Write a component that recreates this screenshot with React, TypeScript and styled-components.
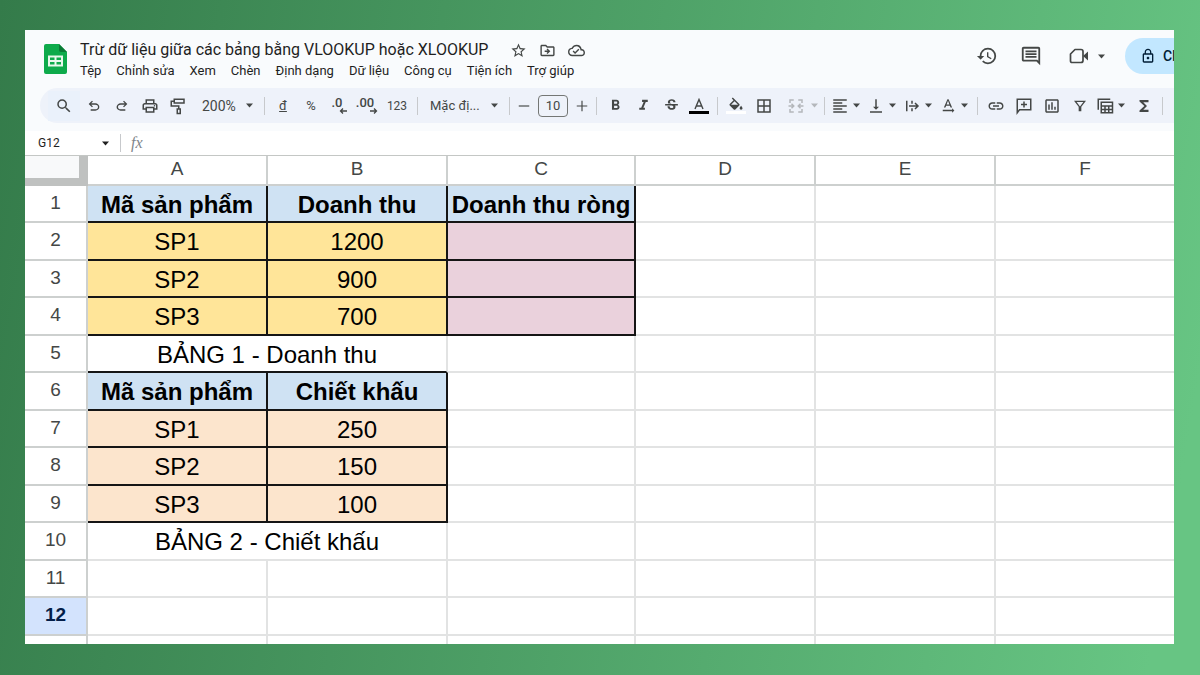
import React from "react";
import styled, { createGlobalStyle, css } from "styled-components";
import {
  MdStarBorder,
  MdOutlineDriveFileMove,
  MdOutlineCloudDone,
  MdHistory,
  MdOutlineComment,
  MdLockOutline,
  MdSearch,
  MdOutlinePrint,
  MdFormatBold,
  MdFormatItalic,
  MdStrikethroughS,
  MdBorderAll,
  MdFormatAlignLeft,
  MdVerticalAlignBottom,
  MdTextRotationNone,
  MdLink,
  MdOutlineInsertChart,
  MdFunctions,
} from "react-icons/md";

const GlobalStyle = createGlobalStyle`
  * { box-sizing: border-box; }
  body {
    margin: 0;
    font-family: Roboto, "Liberation Sans", sans-serif;
    color: #1f1f1f;
  }
  button, input, select { font: inherit; color: inherit; }
`;

const ink = "#444746";
const headerBg = "#f9fbfd";

const Backdrop = styled.div`
  display: flex;
  height: 100vh;
  padding: 30px 26px 31px 25px;
  background: linear-gradient(100deg, #347b4a 0%, #67c583 96%);
`;

const Window = styled.main`
  flex: 1;
  min-width: 0;
  display: flex;
  flex-direction: column;
  overflow: hidden;
  background: #fff;
`;

const Chrome = styled.header`
  flex: none;
  padding-bottom: 8px;
  background: ${headerBg};
`;

const TitleBar = styled.div`
  display: flex;
  align-items: flex-start;
  height: 58px;
  padding-left: 19px;
`;

const LogoLink = styled.a`
  display: flex;
  flex: none;
  padding-top: 14px;
`;

const Doc = styled.div`
  flex: 1;
  min-width: 0;
  margin-left: 13px;
  padding-top: 9px;
`;

const TitleRow = styled.div`
  display: flex;
  align-items: center;
  height: 22px;
  gap: 12px;
  white-space: nowrap;
`;

const Title = styled.h1`
  margin: 0 10px 0 0;
  font-size: 16px;
  line-height: 22px;
  font-weight: 400;
`;

const MenuBar = styled.nav`
  display: flex;
  gap: 15px;
  height: 20px;
`;

const PlainButton = styled.button`
  display: flex;
  align-items: center;
  justify-content: center;
  flex: none;
  padding: 0;
  border: 0;
  background: none;
  color: ${ink};
`;

const MenuItem = styled(PlainButton)`
  font-size: 13px;
  line-height: 20px;
  color: #1f1f1f;
`;

const Actions = styled.div`
  display: flex;
  align-items: center;
  flex: none;
  margin-right: -61px;
  padding-top: 8px;
`;

const ActionButton = styled(PlainButton)`
  width: 44px;
  height: 36px;
`;

const MeetButton = styled(PlainButton)`
  width: 62px;
  height: 36px;
  gap: 8px;
  padding-left: 6px;
  margin-right: 10px;
`;

const ShareButton = styled(PlainButton)`
  width: 110px;
  height: 36px;
  padding-left: 15px;
  gap: 7px;
  justify-content: flex-start;
  border-radius: 18px;
  background: #c2e7ff;
  color: #001d35;
  font-size: 14px;
  font-weight: 500;
`;

const Toolbar = styled.div`
  display: flex;
  align-items: center;
  height: 35px;
  margin-left: 15px;
  padding-left: 8px;
  border-radius: 18px 0 0 18px;
  background: #eef2fa;
  color: ${ink};
  font-size: 13px;
`;

const Tool = styled(PlainButton)<{ $wide?: boolean; $tint?: boolean }>`
  width: ${(p) => (p.$wide ? 32 : 28)}px;
  height: 30px;
  background: ${(p) => (p.$tint ? "#eaf1fb" : "none")};
  font-size: ${(p) => (p.$wide ? 12 : 13)}px;
`;

const MenuTool = styled(PlainButton)<{ $dim?: boolean }>`
  width: 36px;
  height: 30px;
  padding-left: 2px;
  gap: 3px;
  justify-content: flex-start;
  ${(p) =>
    p.$dim &&
    css`
      width: 42px;
      padding-left: 9px;
      gap: 5px;
      color: #b4b7bb;
    `}
`;

const Divider = styled.span<{ $roomy?: boolean }>`
  flex: none;
  width: 1px;
  height: 18px;
  margin: 0 ${(p) => (p.$roomy ? 10 : 4)}px;
  background: #c7c9cc;
`;

const Picker = styled.label<{ $compact?: boolean }>`
  display: flex;
  align-items: center;
  flex: none;
  width: ${(p) => (p.$compact ? 83 : 68)}px;
  padding: 0 6px 0 ${(p) => (p.$compact ? 8 : 10)}px;
  font-size: ${(p) => (p.$compact ? 13 : 14)}px;
`;

const PickerSelect = styled.select`
  flex: 1;
  min-width: 0;
  padding: 0;
  border: 0;
  appearance: none;
  background: none;
`;

const SizeInput = styled.input`
  flex: none;
  width: 30px;
  height: 22px;
  margin: 0 4px;
  padding: 0;
  border: 1px solid #747775;
  border-radius: 4px;
  background: none;
  text-align: center;
  font-size: 13px;
`;

const StepButton = styled(PlainButton)`
  width: 20px;
  height: 30px;
`;

const DecimalLabel = styled.span`
  display: flex;
  flex-direction: column;
  align-items: flex-start;
  padding-right: 4px;
  font-size: 13px;
  line-height: 10px;
  font-weight: 500;
  svg {
    align-self: flex-end;
    margin-right: -4px;
  }
`;

const Swatch = styled.span<{ $color: string }>`
  display: flex;
  flex-direction: column;
  align-items: center;
  svg { display: block; }
  &::after {
    content: "";
    width: 20px;
    height: 3px;
    background: ${(p) => p.$color};
  }
`;

const FormulaBar = styled.div`
  display: flex;
  align-items: center;
  flex: none;
  height: 25px;
  padding-left: 13px;
  border-bottom: 1px solid #c4c7c5;
`;

const NameBox = styled.input`
  width: 63px;
  padding: 0;
  border: 0;
  font-size: 12px;
  color: #1f1f1f;
`;

const Fx = styled.span`
  font: italic 16px "Liberation Serif", serif;
  color: #80868b;
`;

const Grid = styled.div`
  flex: 1;
  min-height: 0;
  overflow: hidden;
`;

const Sheet = styled.table`
  width: 100%;
  table-layout: fixed;
  border-collapse: separate;
  border-spacing: 0;
  font-family: "Liberation Sans", Arial, sans-serif;
  color: #000;
`;

const Col = styled.col<{ $width?: number }>`
  width: ${(p) => (p.$width ? p.$width + "px" : "auto")};
`;

const headCell = css`
  padding: 0 0 2px;
  font-size: 19px;
  line-height: 22px;
  font-weight: 400;
  color: ${ink};
  border: solid #cdd0cf;
`;

const Corner = styled.td`
  height: 30px;
  padding: 0;
  background: #f8f9fa;
  border: solid #bfc1c0;
  border-width: 0 9px 8px 0;
`;

const ColumnHead = styled.th`
  ${headCell}
  height: 30px;
  border-width: 0 2px 2px 0;
  &:last-child { border-right: 0; }
`;

const RowHead = styled.th<{ $active: boolean }>`
  ${headCell}
  border-width: 0 2px 2px 0;
  ${(p) =>
    p.$active &&
    css`
      background: #d3e3fd;
      color: #041e49;
      font-weight: 700;
    `}
`;

const Row = styled.tr`
  height: 37px;
  &:nth-child(even) { height: 38px; }
`;

const fills = {
  head: "#cfe2f3",
  yellow: "#ffe599",
  pink: "#ead1dc",
  peach: "#fce5cd",
  none: "#fff",
};

type Fill = keyof typeof fills;

const lineColor = (dark: boolean) => (dark ? "#151515" : "#e2e3e3");

const Cell = styled.td<{ $fill: Fill; $right: boolean; $bottom: boolean }>`
  padding: 2px 0 0;
  text-align: center;
  white-space: nowrap;
  font-size: 24px;
  line-height: 28px;
  font-weight: ${(p) => (p.$fill === "head" ? 700 : 400)};
  background: ${(p) => fills[p.$fill]};
  border-style: solid;
  border-width: 0 2px 2px 0;
  border-right-color: ${(p) => lineColor(p.$right)};
  border-bottom-color: ${(p) => lineColor(p.$bottom)};
  &:last-child { border-right: 0; }
`;

const Caret = () => (
  <svg width="9" height="5" viewBox="0 0 9 5" aria-hidden="true">
    <path d="M1 0.5h7L4.5 4.5z" fill="currentColor" />
  </svg>
);

const Symbol = ({ d, size = 18 }: { d: string; size?: number }) => (
  <svg width={size} height={size} viewBox="0 0 24 24" fill="none" stroke="currentColor" strokeWidth="2" aria-hidden="true">
    <path d={d} />
  </svg>
);

const SheetsLogo = () => (
  <svg width="23" height="30" viewBox="0 0 23 30" aria-hidden="true">
    <path d="M2 0h13l8 8v20a2 2 0 0 1-2 2H2a2 2 0 0 1-2-2V2a2 2 0 0 1 2-2z" fill="#0eaa4b" />
    <path d="M15 0l8 8h-6a2 2 0 0 1-2-2z" fill="#0a7a35" />
    <path d="M4 11.5h15v11H4z M6 13.5v2.5h4.5v-2.5z M12.5 13.5v2.5H17v-2.5z M6 18v2.5h4.5V18z M12.5 18v2.5H17V18z" fill="#e8f8ec" fillRule="evenodd" />
  </svg>
);

const UndoIcon = () => (
  <svg width="16" height="16" viewBox="0 -960 960 960" fill="currentColor" aria-hidden="true">
    <path d="M280-200v-80h284q63 0 109.5-40T720-420q0-60-46.5-100T564-560H312l104 104-56 56-200-200 200-200 56 56-104 104h252q97 0 169.5 63T800-420q0 94-72.5 157T564-200H280Z" />
  </svg>
);

const RedoIcon = () => (
  <svg width="16" height="16" viewBox="0 -960 960 960" fill="currentColor" aria-hidden="true">
    <path d="M396-200q-97 0-169.5-63T154-420q0-94 72.5-157T396-640h252L544-744l56-56 200 200-200 200-56-56 104-104H396q-63 0-109.5 40T240-420q0 60 46.5 100T396-280h284v80H396Z" />
  </svg>
);

const MeetIcon = () => (
  <svg width="20" height="18" viewBox="0 0 20 18" aria-hidden="true">
    <path d="M6 2.5h6a2 2 0 0 1 2 2v9a2 2 0 0 1-2 2H3A1.5 1.5 0 0 1 1.5 14V7z" fill="none" stroke="currentColor" strokeWidth="1.7" strokeLinejoin="round" />
    <path d="M14 9l5-4.5v9z" fill="currentColor" />
  </svg>
);

const FillIcon = () => (
  <svg width="16" height="14" viewBox="1 0 22 18" fill="currentColor" aria-hidden="true">
    <path d="M16.56 8.94L7.62 0 6.21 1.41l2.38 2.38-5.15 5.15a1.49 1.49 0 0 0 0 2.12l5.5 5.5c.29.29.68.44 1.06.44s.77-.15 1.06-.44l5.5-5.5c.59-.58.59-1.53 0-2.12zM5.21 10L10 5.21 14.79 10zM19 11.5s-2 2.17-2 3.5a2 2 0 0 0 4 0c0-1.33-2-3.5-2-3.5z" />
  </svg>
);

const TextColorIcon = () => (
  <svg width="14" height="13" viewBox="0 0 14 13" fill="none" stroke="currentColor" strokeWidth="1.4" aria-hidden="true">
    <path d="M3 11L7 1.5l4 9.5M4.3 8h5.4" />
  </svg>
);

const Arrow = ({ left }: { left?: boolean }) => (
  <svg width="8" height="6" viewBox="0 0 8 6" fill="none" stroke="currentColor" strokeWidth="1.3" aria-hidden="true">
    <path d={left ? "M8 3H1.5M4 .5L1.5 3 4 5.5" : "M0 3h6.5M4 .5L6.5 3 4 5.5"} />
  </svg>
);

const menus = ["Tệp", "Chỉnh sửa", "Xem", "Chèn", "Định dạng", "Dữ liệu", "Công cụ", "Tiện ích", "Trợ giúp"];
const columns = ["A", "B", "C", "D", "E", "F"];

type CellData = { text?: string; fill?: Fill; right?: boolean; bottom?: boolean; span?: number };

const boxed = (fill: Fill, ...texts: string[]): CellData[] =>
  texts.map((text) => ({ text, fill, right: true, bottom: true }));

const rows: CellData[][] = [
  boxed("head", "Mã sản phẩm", "Doanh thu", "Doanh thu ròng"),
  [...boxed("yellow", "SP1", "1200"), ...boxed("pink", "")],
  [...boxed("yellow", "SP2", "900"), ...boxed("pink", "")],
  [...boxed("yellow", "SP3", "700"), ...boxed("pink", "")],
  [{ text: "BẢNG 1 - Doanh thu", span: 2, bottom: true }],
  boxed("head", "Mã sản phẩm", "Chiết khấu"),
  boxed("peach", "SP1", "250"),
  boxed("peach", "SP2", "150"),
  boxed("peach", "SP3", "100"),
  [{ text: "BẢNG 2 - Chiết khấu", span: 2 }],
  [],
  [],
  [],
];

const padRow = (cells: CellData[]): CellData[] => {
  const used = cells.reduce((sum, c) => sum + (c.span ?? 1), 0);
  return [...cells, ...Array.from({ length: columns.length - used }, () => ({}))];
};

export default function App() {
  return (
    <>
      <GlobalStyle />
      <Backdrop>
        <Window>
          <Chrome>
            <TitleBar>
              <LogoLink href="#" aria-label="Trang tính"><SheetsLogo /></LogoLink>
              <Doc>
                <TitleRow>
                  <Title>Trừ dữ liệu giữa các bảng bằng VLOOKUP hoặc XLOOKUP</Title>
                  <PlainButton aria-label="Gắn dấu sao"><MdStarBorder size={17} /></PlainButton>
                  <PlainButton aria-label="Di chuyển"><MdOutlineDriveFileMove size={17} /></PlainButton>
                  <PlainButton aria-label="Trạng thái tài liệu"><MdOutlineCloudDone size={17} /></PlainButton>
                </TitleRow>
                <MenuBar>
                  {menus.map((m) => (
                    <MenuItem key={m}>{m}</MenuItem>
                  ))}
                </MenuBar>
              </Doc>
              <Actions>
                <ActionButton aria-label="Nhật ký phiên bản"><MdHistory size={22} /></ActionButton>
                <ActionButton aria-label="Nhận xét"><MdOutlineComment size={22} /></ActionButton>
                <MeetButton aria-label="Cuộc họp">
                  <MeetIcon />
                  <Caret />
                </MeetButton>
                <ShareButton>
                  <MdLockOutline size={16} />
                  Chia sẻ
                </ShareButton>
              </Actions>
            </TitleBar>
            <Toolbar role="toolbar">
              <Tool $wide $tint aria-label="Tìm kiếm"><MdSearch size={18} /></Tool>
              <Tool aria-label="Hủy"><UndoIcon /></Tool>
              <Tool aria-label="Làm lại"><RedoIcon /></Tool>
              <Tool aria-label="In"><MdOutlinePrint size={18} /></Tool>
              <Tool aria-label="Sao chép định dạng">
                <Symbol d="M7 3h13v5H7zM7 5.5H3V12h10v4M11 16h4v6h-4z" />
              </Tool>
              <Picker>
                <PickerSelect aria-label="Thu phóng"><option>200%</option></PickerSelect>
                <Caret />
              </Picker>
              <Divider />
              <Tool aria-label="Định dạng tiền tệ"><u>đ</u></Tool>
              <Tool aria-label="Định dạng phần trăm">%</Tool>
              <Tool aria-label="Giảm số thập phân">
                <DecimalLabel>.0<Arrow left /></DecimalLabel>
              </Tool>
              <Tool aria-label="Tăng số thập phân">
                <DecimalLabel>.00<Arrow /></DecimalLabel>
              </Tool>
              <Tool $wide>123</Tool>
              <Divider />
              <Picker $compact>
                <PickerSelect aria-label="Phông chữ"><option>Mặc đị...</option></PickerSelect>
                <Caret />
              </Picker>
              <Divider />
              <StepButton aria-label="Giảm cỡ chữ"><Symbol size={14} d="M3 12h18" /></StepButton>
              <SizeInput aria-label="Cỡ chữ" defaultValue="10" />
              <StepButton aria-label="Tăng cỡ chữ"><Symbol size={14} d="M3 12h18M12 3v18" /></StepButton>
              <Divider />
              <Tool aria-label="Đậm"><MdFormatBold size={17} /></Tool>
              <Tool aria-label="Nghiêng"><MdFormatItalic size={17} /></Tool>
              <Tool aria-label="Gạch ngang"><MdStrikethroughS size={17} /></Tool>
              <Tool aria-label="Màu chữ">
                <Swatch $color="#000"><TextColorIcon /></Swatch>
              </Tool>
              <Divider />
              <Tool aria-label="Màu nền">
                <Swatch $color="#fff"><FillIcon /></Swatch>
              </Tool>
              <Tool aria-label="Đường viền"><MdBorderAll size={18} /></Tool>
              <MenuTool $dim aria-label="Hợp nhất ô">
                <Symbol d="M9 4H4v4M15 4h5v4M9 20H4v-4M15 20h5v-4M2 12h6M22 12h-6M6 9l3 3-3 3M18 9l-3 3 3 3" />
                <Caret />
              </MenuTool>
              <Divider />
              <MenuTool aria-label="Căn ngang"><MdFormatAlignLeft size={18} /><Caret /></MenuTool>
              <MenuTool aria-label="Căn dọc"><MdVerticalAlignBottom size={18} /><Caret /></MenuTool>
              <MenuTool aria-label="Xuống dòng">
                <Symbol d="M5 5v14M12 5v4M12 15v4M8 12h11M16 8l4 4-4 4" />
                <Caret />
              </MenuTool>
              <MenuTool aria-label="Xoay văn bản"><MdTextRotationNone size={18} /><Caret /></MenuTool>
              <Divider />
              <Tool aria-label="Chèn đường liên kết"><MdLink size={18} /></Tool>
              <Tool aria-label="Chèn nhận xét">
                <Symbol d="M3 21V3h18v14H6zM12 6v8M8 10h8" />
              </Tool>
              <Tool aria-label="Chèn biểu đồ"><MdOutlineInsertChart size={18} /></Tool>
              <Tool aria-label="Bộ lọc">
                <Symbol size={16} d="M5 5h14l-6 8v6h-2v-6z" />
              </Tool>
              <MenuTool aria-label="Chế độ xem bảng">
                <Symbol d="M3 17V3h16M7 7h15v14H7zM7 12h15M7 16.5h15M12 12v9M17 12v9" />
                <Caret />
              </MenuTool>
              <Tool aria-label="Hàm"><MdFunctions size={18} /></Tool>
              <Divider />
            </Toolbar>
          </Chrome>
          <FormulaBar>
            <NameBox aria-label="Hộp tên" defaultValue="G12" />
            <Caret />
            <Divider $roomy />
            <Fx>fx</Fx>
          </FormulaBar>
          <Grid>
            <Sheet>
              <colgroup>
                <Col $width={63} />
                <Col $width={180} />
                <Col $width={180} />
                <Col $width={188} />
                <Col $width={180} />
                <Col $width={180} />
                <Col />
              </colgroup>
              <thead>
                <tr>
                  <Corner />
                  {columns.map((c) => (
                    <ColumnHead key={c} scope="col">{c}</ColumnHead>
                  ))}
                </tr>
              </thead>
              <tbody>
                {rows.map((cells, r) => (
                  <Row key={r}>
                    <RowHead scope="row" $active={r === 11}>{r + 1}</RowHead>
                    {padRow(cells).map((c, i) => (
                      <Cell
                        key={i}
                        colSpan={c.span}
                        $fill={c.fill ?? "none"}
                        $right={!!c.right}
                        $bottom={!!c.bottom}
                      >
                        {c.text}
                      </Cell>
                    ))}
                  </Row>
                ))}
              </tbody>
            </Sheet>
          </Grid>
        </Window>
      </Backdrop>
    </>
  );
}
